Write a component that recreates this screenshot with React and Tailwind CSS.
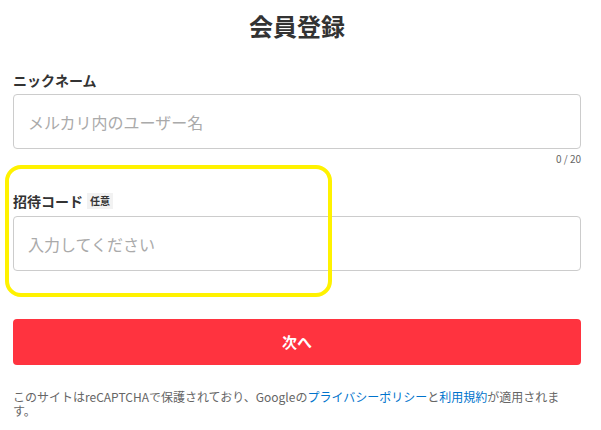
export default function App() {
  return (
    <div
      className="relative w-[601px] h-[430px] bg-white text-[#333] overflow-hidden"
      style={{ fontFamily: '"Noto Sans CJK JP", "Noto Sans", sans-serif' }}
    >
      <div className="pl-[13px] pr-[20px] pt-[10px]">
        <h1 className="text-center text-[24px] font-bold leading-[32px] text-[#333]">会員登録</h1>

        <div className="mt-[28px]">
          <label className="block text-[14px] font-bold leading-[20px] mb-[4px]">ニックネーム</label>
          <div className="h-[55px] border border-[#ccc] rounded-[4px] flex items-center px-[14px]">
            <span className="text-[16px] text-[#aaa]">メルカリ内のユーザー名</span>
          </div>
          <div className="text-right text-[10px] leading-[14px] mt-[3px] text-[#666]">0 / 20</div>
        </div>

        <div className="mt-[25px]">
          <div className="flex items-center gap-[4px] mb-[5px]">
            <label className="text-[14px] font-bold leading-[20px]">招待コード</label>
            <span className="bg-[#f2f2f2] text-[10px] font-bold leading-[16px] px-[3px] text-[#333]">任意</span>
          </div>
          <div className="h-[55px] border border-[#ccc] rounded-[4px] flex items-center px-[14px]">
            <span className="text-[16px] text-[#aaa]">入力してください</span>
          </div>
        </div>

        <button className="mt-[48px] w-full h-[46px] bg-[#ff333f] rounded-[4px] text-white text-[15px] font-bold">
          次へ
        </button>

        <p className="mt-[25px] text-[12px] leading-[14px] text-[#666]">
          このサイトはreCAPTCHAで保護されており、Googleの<span className="text-[#0073cc]">プライバシーポリシー</span>と<span className="text-[#0073cc]">利用規約</span>が適用されます。
        </p>
      </div>

      <div className="absolute left-[5px] top-[165px] w-[327px] h-[132px] border-[4px] border-[#fff200] rounded-[16px] pointer-events-none" />
    </div>
  );
}
